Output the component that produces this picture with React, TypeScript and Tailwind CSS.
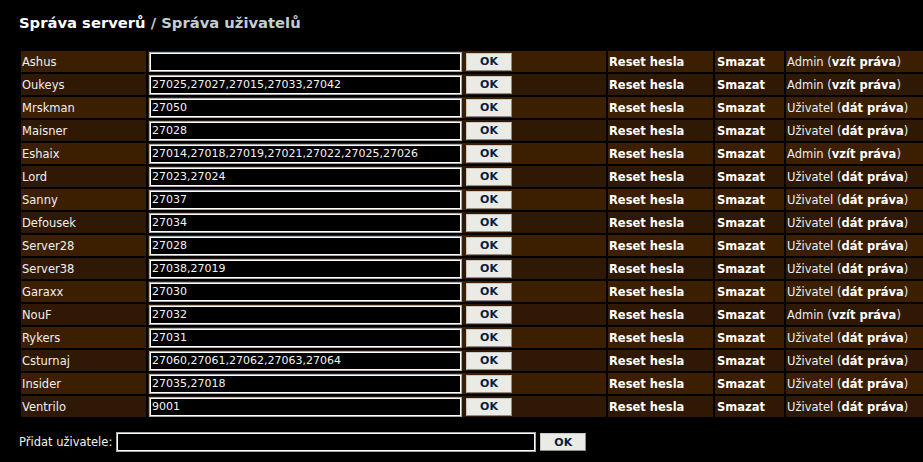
import React from "react";

type Row = { name: string; ports: string; admin: boolean };

const rows: Row[] = [
  { name: "Ashus", ports: "", admin: true },
  { name: "Oukeys", ports: "27025,27027,27015,27033,27042", admin: true },
  { name: "Mrskman", ports: "27050", admin: false },
  { name: "Maisner", ports: "27028", admin: false },
  { name: "Eshaix", ports: "27014,27018,27019,27021,27022,27025,27026", admin: true },
  { name: "Lord", ports: "27023,27024", admin: false },
  { name: "Sanny", ports: "27037", admin: false },
  { name: "Defousek", ports: "27034", admin: false },
  { name: "Server28", ports: "27028", admin: false },
  { name: "Server38", ports: "27038,27019", admin: false },
  { name: "Garaxx", ports: "27030", admin: false },
  { name: "NouF", ports: "27032", admin: true },
  { name: "Rykers", ports: "27031", admin: false },
  { name: "Csturnaj", ports: "27060,27061,27062,27063,27064", admin: false },
  { name: "Insider", ports: "27035,27018", admin: false },
  { name: "Ventrilo", ports: "9001", admin: false },
];

const OkButton = () => (
  <button className="h-[18px] w-[46px] bg-[#ebebe6] border border-[#c8c8c4] border-r-[#8c8c88] border-b-[#8c8c88] text-[11px] font-bold text-[#0c1a3c] leading-none">
    OK
  </button>
);

const PortInput = ({ value, width }: { value: string; width: string }) => (
  <input
    defaultValue={value}
    className={`${width} h-[20px] bg-black text-[#f4f4f4] text-[11px] px-[2px] border border-[#a8a8a8] shadow-[inset_0_0_0_1px_#ffffff] outline-none`}
  />
);

export default function App() {
  return (
    <div className="min-h-screen w-full overflow-hidden bg-black text-[#f0f0f0] font-['DejaVu_Sans',Verdana,sans-serif] text-[11.5px]">
      <h1 className="pl-[19px] pt-[13px] text-[14.75px] font-bold leading-[20px] text-white">
        Správa serverů <span className="text-[#c4ccd4]">/ Správa uživatelů</span>
      </h1>

      <table className="ml-[19px] mt-[16px] border-separate border-spacing-[2px] w-[909px] table-fixed">
        <colgroup>
          <col className="w-[125px]" />
          <col className="w-[458px]" />
          <col className="w-[105px]" />
          <col className="w-[69px]" />
          <col className="w-[140px]" />
        </colgroup>
        <tbody>
          {rows.map((r, i) => {
            const bg = i % 2 === 0 ? "bg-[#3c1f01]" : "bg-[#2f1904]";
            return (
              <tr key={r.name} className="h-[21px]">
                <td className={`${bg} p-0 pl-px pt-[2px] align-middle whitespace-nowrap`}>{r.name}</td>
                <td className={`${bg} p-0 align-middle`}>
                  <div className="flex items-center gap-[4px] pl-px">
                    <PortInput value={r.ports} width="w-[313px]" />
                    <OkButton />
                  </div>
                </td>
                <td className={`${bg} p-0 pl-px pt-[2px] align-middle font-bold text-white whitespace-nowrap`}>
                  Reset hesla
                </td>
                <td className={`${bg} p-0 pl-[2px] pt-[2px] align-middle font-bold text-white whitespace-nowrap`}>
                  Smazat
                </td>
                <td className={`${bg} p-0 pl-px pt-[2px] align-middle whitespace-nowrap text-[#e8eef4]`}>
                  {r.admin ? "Admin" : "Uživatel"} (
                  <span className="font-bold text-white">{r.admin ? "vzít práva" : "dát práva"}</span>)
                </td>
              </tr>
            );
          })}
        </tbody>
      </table>

      <div className="flex items-center gap-[4px] pl-[19px] mt-[13px]">
        <span className="pt-[1px]">Přidat uživatele:</span>
        <PortInput value="" width="w-[420px]" />
        <OkButton />
      </div>
    </div>
  );
}
